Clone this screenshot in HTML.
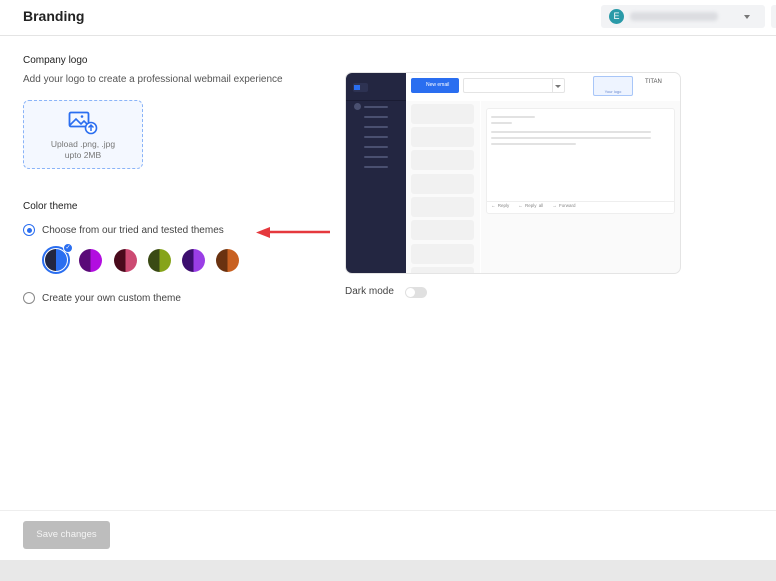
<!DOCTYPE html>
<html><head><meta charset="utf-8"><style>
*{box-sizing:border-box;margin:0;padding:0}
body{width:776px;height:581px;overflow:hidden;background:#fff;font-family:"Liberation Sans",sans-serif;color:#333;position:relative}
.a{position:absolute}
.bar{position:absolute;height:2px;background:#e2e2e2;border-radius:1px}
.sb{position:absolute;height:2px;background:#4a5070;border-radius:1px}
.card{position:absolute;left:411px;width:63px;height:20px;background:#f1f1f1;border-radius:3px}
</style></head><body>
<div class="a" style="left:23px;top:8px;font-size:14px;font-weight:bold;color:#222">Branding</div>
<div class="a" style="left:601px;top:5px;width:164px;height:23px;background:#f2f3f5;border-radius:3px"></div>
<div class="a" style="left:609px;top:9px;width:15px;height:15px;border-radius:50%;background:#2a9aa8;color:#fff;font-size:9px;text-align:center;line-height:15px">E</div>
<div class="a" style="left:630px;top:12px;width:88px;height:9px;background:#dcdde1;border-radius:4px;filter:blur(1.5px)"></div>
<div class="a" style="left:744px;top:15px;border-left:3.5px solid transparent;border-right:3.5px solid transparent;border-top:4px solid #777"></div>
<div class="a" style="left:771px;top:5px;width:6px;height:23px;background:#f2f3f5;border-radius:3px 0 0 3px"></div>
<div class="a" style="left:0;top:35px;width:776px;height:1px;background:#e4e4e4"></div>

<div class="a" style="left:23px;top:55px;font-size:10px;color:#222">Company logo</div>
<div class="a" style="left:23px;top:74px;font-size:10px;color:#555">Add your logo to create a professional webmail experience</div>
<div class="a" style="left:23px;top:100px;width:120px;height:69px;border:1.5px dashed #8ab4f8;border-radius:6px;background:#f4f8ff"></div>
<svg class="a" style="left:68px;top:111px" width="32" height="24" viewBox="0 0 32 24"><rect x="1.5" y="1.5" width="19" height="14" rx="1.5" fill="none" stroke="#2a6ef0" stroke-width="1.8"/><path d="M2 14l6-6 5 5 3-3 4 4" fill="none" stroke="#2a6ef0" stroke-width="1.6"/><circle cx="14" cy="5.5" r="1.3" fill="#2a6ef0"/><circle cx="23" cy="17" r="5.5" fill="#fff" stroke="#2a6ef0" stroke-width="1.6"/><path d="M23 20v-6M20.5 16.5l2.5-2.5 2.5 2.5" fill="none" stroke="#2a6ef0" stroke-width="1.5"/></svg>
<div class="a" style="left:23px;top:139px;width:120px;text-align:center;font-size:8.5px;color:#777;line-height:11px">Upload .png, .jpg<br>upto 2MB</div>

<div class="a" style="left:23px;top:201px;font-size:10px;color:#222">Color theme</div>
<div class="a" style="left:23px;top:224px;width:12px;height:12px;border:1.5px solid #2a6ef0;border-radius:50%"></div>
<div class="a" style="left:26.5px;top:227.5px;width:5px;height:5px;background:#2a6ef0;border-radius:50%"></div>
<div class="a" style="left:42px;top:225px;font-size:10px;color:#444">Choose from our tried and tested themes</div>
<svg class="a" style="left:252px;top:225px" width="82" height="16"><path d="M78 7H14" stroke="#e5383d" stroke-width="2.4"/><path d="M4 7.5L18 2v11z" fill="#e5383d"/></svg>
<div class="a" style="left:42px;top:246px;width:28px;height:28px;border:2px solid #2a6ef0;border-radius:50%"></div>
<div class="a" style="left:45px;top:249px;width:22px;height:22px;border-radius:50%;background:linear-gradient(90deg,#232641 50%,#2a6ef0 50%)"></div>
<div class="a" style="left:63px;top:243px;width:10px;height:10px;border-radius:50%;background:#2a6ef0;border:1px solid #fff;color:#fff;font-size:6px;text-align:center;line-height:8px">✓</div>
<div class="a" style="left:79px;top:249px;width:23px;height:23px;border-radius:50%;background:linear-gradient(90deg,#5a0a78 50%,#b20ee0 50%)"></div>
<div class="a" style="left:114px;top:249px;width:23px;height:23px;border-radius:50%;background:linear-gradient(90deg,#4a0a1c 50%,#cc4a72 50%)"></div>
<div class="a" style="left:148px;top:249px;width:23px;height:23px;border-radius:50%;background:linear-gradient(90deg,#3a4a14 50%,#86a41a 50%)"></div>
<div class="a" style="left:182px;top:249px;width:23px;height:23px;border-radius:50%;background:linear-gradient(90deg,#3c0e6e 50%,#9a3ee6 50%)"></div>
<div class="a" style="left:216px;top:249px;width:23px;height:23px;border-radius:50%;background:linear-gradient(90deg,#6a3210 50%,#c86020 50%)"></div>
<div class="a" style="left:23px;top:292px;width:12px;height:12px;border:1px solid #888;border-radius:50%"></div>
<div class="a" style="left:42px;top:293px;font-size:10px;color:#444">Create your own custom theme</div>

<div class="a" style="left:345px;top:72px;width:336px;height:202px;border:1px solid #e4e4e4;border-radius:7px;overflow:hidden;background:#fafafa">
 <div class="a" style="left:0;top:0;width:60px;height:202px;background:#232641"></div>
 <div class="a" style="left:0;top:27px;width:60px;height:1px;background:#1a1c33"></div>
 <div class="a" style="left:7px;top:10px;width:15px;height:9px;background:#2d3252;border-radius:2px"></div>
 <div class="a" style="left:8px;top:12px;width:6px;height:5px;background:#2a6ef0"></div>
 <div class="a" style="left:8px;top:30px;width:7px;height:7px;border-radius:50%;background:#4a5070"></div>
 <div class="sb" style="left:18px;top:33px;width:24px"></div>
 <div class="sb" style="left:18px;top:43px;width:24px"></div><div class="sb" style="left:18px;top:53px;width:24px"></div><div class="sb" style="left:18px;top:63px;width:24px"></div><div class="sb" style="left:18px;top:73px;width:24px"></div><div class="sb" style="left:18px;top:83px;width:24px"></div><div class="sb" style="left:18px;top:93px;width:24px"></div>
 <div class="a" style="left:60px;top:0;width:276px;height:28px;background:#fff"></div>
 <div class="a" style="left:65px;top:5px;width:48px;height:15px;background:#2a6ef0;border-radius:2px;color:#fff;font-size:5px;line-height:15px;padding-left:15px">New email</div>
 <div class="a" style="left:117px;top:5px;width:102px;height:15px;border:1px solid #e4e4e4;border-radius:2px;background:#fff"></div>
 <div class="a" style="left:206px;top:5px;width:1px;height:15px;background:#e4e4e4"></div>
 <div class="a" style="left:209px;top:12px;border-left:3px solid transparent;border-right:3px solid transparent;border-top:3px solid #777"></div>
 <div class="a" style="left:247px;top:3px;width:40px;height:20px;border:1px solid #a8c6f8;background:#eef4ff;border-radius:2px;font-size:4px;color:#6a8ad0;text-align:center;padding-top:12px">Your logo</div>
 <div class="a" style="left:299px;top:6px;font-size:6px;color:#555">TITAN</div>
 <div class="card" style="left:65px;top:31px"></div><div class="card" style="left:65px;top:54px"></div><div class="card" style="left:65px;top:77px"></div><div class="card" style="left:65px;top:101px"></div><div class="card" style="left:65px;top:124px"></div><div class="card" style="left:65px;top:147px"></div><div class="card" style="left:65px;top:171px"></div><div class="card" style="left:65px;top:194px"></div>
 <div class="a" style="left:134px;top:28px;width:1px;height:174px;background:#fff"></div>
 <div class="a" style="left:140px;top:35px;width:189px;height:106px;background:#fff;border:1px solid #eee;border-radius:3px"></div>
 <div class="bar" style="left:145px;top:43px;width:44px"></div><div class="bar" style="left:145px;top:49px;width:21px"></div>
 <div class="bar" style="left:145px;top:58px;width:160px"></div><div class="bar" style="left:145px;top:64px;width:160px"></div><div class="bar" style="left:145px;top:70px;width:85px"></div>
 <div class="a" style="left:140px;top:128px;width:189px;height:1px;background:#eee"></div>
 <div class="a" style="left:145px;top:130px;font-size:4.5px;color:#888;word-spacing:1px">← Reply &nbsp; &nbsp;← Reply all &nbsp; &nbsp;→ Forward</div>
</div>
<div class="a" style="left:345px;top:286px;font-size:10px;color:#444">Dark mode</div>
<div class="a" style="left:405px;top:287px;width:22px;height:11px;background:#e0e0e0;border-radius:6px"></div>
<div class="a" style="left:406px;top:288px;width:9px;height:9px;background:#fff;border-radius:50%"></div>

<div class="a" style="left:0;top:510px;width:776px;height:1px;background:#eee"></div>
<div class="a" style="left:23px;top:521px;width:87px;height:28px;background:#bdbdbd;border-radius:3px;color:#f4f4f4;font-size:9.5px;text-align:center;line-height:28px">Save changes</div>
<div class="a" style="left:0;top:560px;width:776px;height:21px;background:#e8e8e8"></div>
</body></html>
